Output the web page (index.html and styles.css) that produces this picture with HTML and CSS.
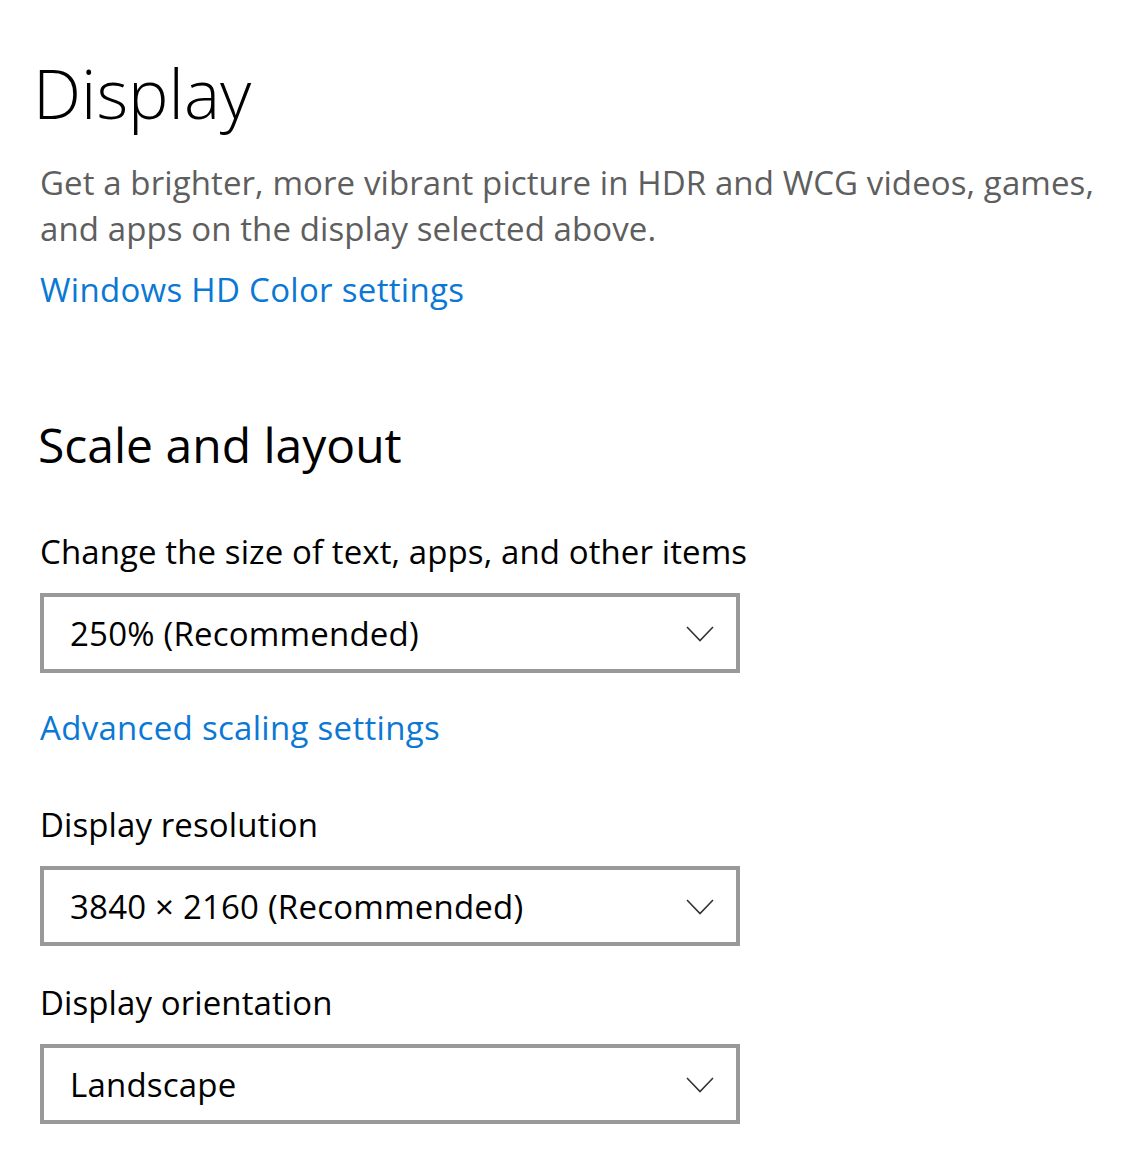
FILE: index.html
```html
<!DOCTYPE html>
<html lang="en">

<head>
    <meta charset="UTF-8">
    <meta name="viewport" content="width=device-width, initial-scale=1.0">
    <title>Display settings</title>
    <link rel="stylesheet" href="styles.css">
</head>

<body>
    <main class="page">
        <h1 class="page-title">Display</h1>
        <p class="description">Get a brighter, more vibrant picture in HDR and WCG videos, games, and apps on the display selected above.</p>
        <a class="link" href="#">Windows HD Color settings</a>

        <h2 class="section-title">Scale and layout</h2>

        <div class="field field-first">
            <label class="field-label">Change the size of text, apps, and other items</label>
            <div class="select">
                <span class="select-value">250% (Recommended)</span>
                <svg class="chevron" width="28" height="16" viewBox="0 0 28 16">
                    <path d="M1 1 L14 14.5 L27 1" fill="none" stroke="#333" stroke-width="1.6"/>
                </svg>
            </div>
        </div>
        <a class="link link-advanced" href="#">Advanced scaling settings</a>

        <div class="field field-resolution">
            <label class="field-label">Display resolution</label>
            <div class="select">
                <span class="select-value">3840 × 2160 (Recommended)</span>
                <svg class="chevron" width="28" height="16" viewBox="0 0 28 16">
                    <path d="M1 1 L14 14.5 L27 1" fill="none" stroke="#333" stroke-width="1.6"/>
                </svg>
            </div>
        </div>

        <div class="field field-orientation">
            <label class="field-label">Display orientation</label>
            <div class="select">
                <span class="select-value">Landscape</span>
                <svg class="chevron" width="28" height="16" viewBox="0 0 28 16">
                    <path d="M1 1 L14 14.5 L27 1" fill="none" stroke="#333" stroke-width="1.6"/>
                </svg>
            </div>
        </div>
    </main>
</body>

</html>
```

FILE: styles.css
```css
body {
    margin: 0;
    background-color: #ffffff;
    font-family: "Open Sans", "Noto Sans", sans-serif;
    color: #000000;
}

.page {
    padding: 47px 0 0 40px;
}

.page-title {
    margin: 0 0 0 -7px;
    font-size: 68px;
    font-weight: 300;
    line-height: 92px;
}

.description {
    margin: 21px 0 0 0;
    width: 1090px;
    font-size: 33px;
    letter-spacing: 0.1px;
    line-height: 46px;
    color: #5e5e5e;
}

.link {
    display: block;
    margin-top: 16px;
    font-size: 33px;
    letter-spacing: 0.3px;
    line-height: 44px;
    color: #0a78d4;
    text-decoration: none;
}

.section-title {
    margin: 101px 0 0 -2px;
    font-size: 48px;
    font-weight: 400;
    line-height: 64px;
}

.field-first {
    margin-top: 53px;
}

.field-resolution {
    margin-top: 53px;
}

.field-orientation {
    margin-top: 35px;
}

.field-label {
    display: block;
    font-size: 33px;
    letter-spacing: 0.1px;
    line-height: 44px;
}

.select {
    display: flex;
    align-items: center;
    justify-content: space-between;
    box-sizing: border-box;
    width: 700px;
    height: 80px;
    margin-top: 19px;
    padding: 0 22px 0 26px;
    border: 4px solid #999999;
}

.select-value {
    font-size: 33px;
    letter-spacing: 0.2px;
}

.chevron {
    margin-top: 2px;
}

.link-advanced {
    margin-top: 33px;
}
```
